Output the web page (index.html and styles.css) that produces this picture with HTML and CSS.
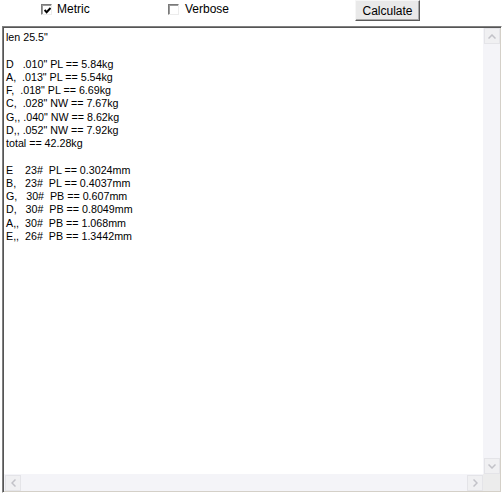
FILE: index.html
```html
<!DOCTYPE html>
<html>
<head>
<meta charset="utf-8">
<link rel="stylesheet" href="styles.css">
</head>
<body>
<div class="toolbar">
  <label class="opt opt-metric"><span class="cb"><svg viewBox="0 0 7 7" width="7" height="7"><path d="M0.6 3 L2.6 5.2 L6.6 1" fill="none" stroke="#000" stroke-width="2"/></svg></span><span class="lbl">Metric</span></label>
  <label class="opt opt-verbose"><span class="cb"></span><span class="lbl">Verbose</span></label>
  <button class="btn">Calculate</button>
</div>
<div class="output">
  <div class="text">len 25.5"

D   .010" PL == 5.84kg
A,  .013" PL == 5.54kg
F,  .018" PL == 6.69kg
C,  .028" NW == 7.67kg
G,, .040" NW == 8.62kg
D,, .052" NW == 7.92kg
total == 42.28kg

E    23#  PL == 0.3024mm
B,   23#  PL == 0.4037mm
G,   30#  PB == 0.607mm
D,   30#  PB == 0.8049mm
A,,  30#  PB == 1.068mm
E,,  26#  PB == 1.3442mm</div>
  <div class="vscroll">
    <div class="sbtn"><svg viewBox="0 0 8 5" width="8" height="5"><path d="M0.5 4.5 L4 1 L7.5 4.5" fill="none" stroke="#c2c2c8" stroke-width="1.5"/></svg></div>
    <div class="track"></div>
    <div class="sbtn"><svg viewBox="0 0 8 5" width="8" height="5"><path d="M0.5 0.5 L4 4 L7.5 0.5" fill="none" stroke="#c2c2c8" stroke-width="1.5"/></svg></div>
  </div>
  <div class="hscroll">
    <div class="sbtn"><svg viewBox="0 0 5 8" width="5" height="8"><path d="M4.5 0.5 L1 4 L4.5 7.5" fill="none" stroke="#c2c2c8" stroke-width="1.5"/></svg></div>
    <div class="track"></div>
    <div class="sbtn"><svg viewBox="0 0 5 8" width="5" height="8"><path d="M0.5 0.5 L4 4 L0.5 7.5" fill="none" stroke="#c2c2c8" stroke-width="1.5"/></svg></div>
  </div>
  <div class="corner"></div>
</div>
</body>
</html>
```
FILE: styles.css
```css
html, body {
  margin: 0;
  padding: 0;
  background: #fff;
}
body {
  font-family: "Liberation Sans", Arial, sans-serif;
  color: #000;
  width: 503px;
  height: 493px;
  overflow: hidden;
}
.toolbar {
  display: flex;
  align-items: flex-start;
  height: 26px;
  padding-left: 41px;
  box-sizing: border-box;
}
.opt {
  display: flex;
  align-items: flex-start;
  font-size: 12px;
  line-height: 14px;
  margin-top: 2px;
}
.opt-metric { width: 127px; gap: 5px; }
.opt-verbose { width: 187px; gap: 6px; }
.cb {
  width: 11px;
  height: 11px;
  margin-top: 2px;
  box-sizing: border-box;
  background: #fff;
  border-top: 1px solid #7a7a7a;
  border-left: 1px solid #7a7a7a;
  border-right: 1px solid #ececec;
  border-bottom: 1px solid #ececec;
  box-shadow: inset 1px 1px 0 #9a9a9a;
  display: flex;
  align-items: center;
  justify-content: center;
}
.cb svg { margin-left: 1px; margin-top: 1px; }
.btn {
  width: 65px;
  height: 21px;
  margin: 0;
  padding: 0;
  font-family: "Liberation Sans", Arial, sans-serif;
  font-size: 12px;
  line-height: 14px;
  color: #000;
  background: #e9e9e9;
  border-top: 1px solid #f6f6f6;
  border-left: 1px solid #f6f6f6;
  border-right: 1px solid #5a5a5a;
  border-bottom: 1px solid #5a5a5a;
  box-shadow: inset -1px -1px 0 #a8a8a8;
  box-sizing: border-box;
}
.output {
  margin-left: 2px;
  width: 500px;
  height: 467px;
  box-sizing: border-box;
  border-top: 1px solid #808080;
  border-left: 1px solid #808080;
  border-right: 1px solid #fff;
  border-bottom: 1px solid #fff;
  box-shadow: inset 1px 1px 0 #555, inset -1px -1px 0 #d4d0c8;
  padding: 1px;
  display: grid;
  grid-template-columns: 1fr 17px;
  grid-template-rows: 1fr 17px;
}
.text {
  white-space: pre;
  font-size: 10.7px;
  line-height: 13.27px;
  padding: 3px 0 0 2px;
  overflow: hidden;
}
.vscroll {
  display: flex;
  flex-direction: column;
  background: #f4f4f8;
}
.hscroll {
  display: flex;
  background: #f4f4f8;
}
.track { flex: 1; }
.sbtn {
  width: 16px;
  height: 16px;
  box-sizing: border-box;
  border: 1px solid #e4e4e8;
  background: #f0f0f2;
  display: flex;
  align-items: center;
  justify-content: center;
  margin: 0 0 0 1px;
}
.hscroll .sbtn { margin: 1px 0 0 1px; }
.corner { background: #ececec; }
```
